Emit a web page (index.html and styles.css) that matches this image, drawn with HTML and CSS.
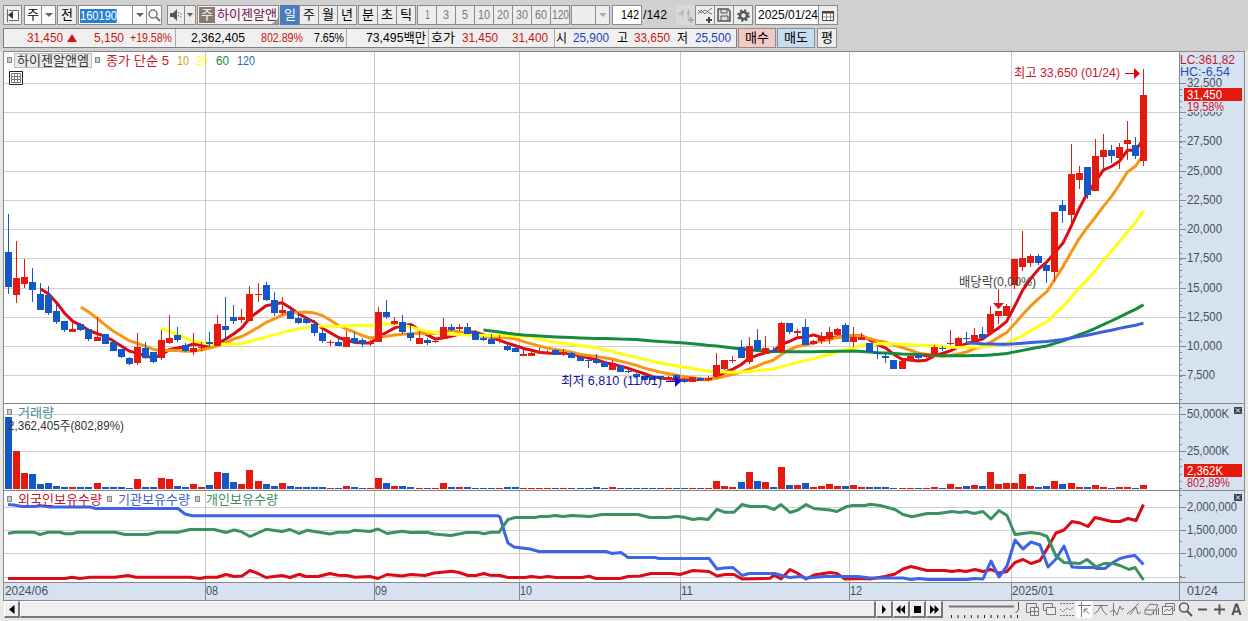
FILE: index.html
```html
<!DOCTYPE html>
<html lang="ko">
<head>
<meta charset="utf-8">
<title>하이젠알앤엠</title>
<link rel="stylesheet" href="styles.css">
</head>
<body>
<div class="app">
  <div class="toolbar">
    <button class="btn w19"><svg width="15" height="15"><path d="M2.500 1v13M4 2.500h9.500v10H4" fill="#fff" stroke="#666"/><path d="M3 7l5-4v8z" fill="#333"/></svg></button>
    <button class="btn w18 g2 white">주</button><button class="btn w15 j white"><i class="dn"></i></button>
    <button class="btn w20 g1">전</button>
    <div class="code g1"><span class="sel" data-w="37">160190</span></div><button class="btn w15 j white"><i class="dn"></i></button><button class="btn w16 j white"><svg width="14" height="15"><circle cx="6" cy="6" r="4" fill="none" stroke="#777" stroke-width="1.500"/><path d="M9 9l4 4" stroke="#777" stroke-width="2"/></svg></button>
    <button class="btn w18 g5"><svg width="14" height="14"><path d="M1 5h3l4-4v12l-4-4H1z" fill="#555"/><path d="M9.500 4v6M12 5v5" stroke="#666" stroke-dasharray="1.500 1.500"/></svg></button><button class="btn w11 j"><i class="dn sm"></i></button>
    <div class="name g1"><b>주</b><span data-w="60">하이젠알앤</span><i></i></div>
    <button class="btn w20 g1 on">일</button><button class="btn w20 j">주</button><button class="btn w20 j">월</button><button class="btn w20 j">년</button>
    <button class="btn w20 g1">분</button><button class="btn w20 j">초</button><button class="btn w20 j">틱</button>
    <button class="btn n g1"><span data-w="5">1</span></button><button class="btn n j"><span data-w="6">3</span></button><button class="btn n j"><span data-w="6">5</span></button><button class="btn n j"><span data-w="12">10</span></button><button class="btn n j"><span data-w="12">20</span></button><button class="btn n j"><span data-w="12">30</span></button><button class="btn n j"><span data-w="12">60</span></button><button class="btn n j"><span data-w="17">120</span></button>
    <div class="btn w25 g1"></div><button class="btn w15 j"><i class="dn off"></i></button>
    <div class="count g2"><span data-w="18">142</span></div><div class="total"><span data-w="24">/142</span></div>
    <button class="btn w20 tools bare"><svg width="17" height="16"><path d="M4.500 2v9M10.500 2v9" stroke="#bbb"/><path d="M3 4h3v4H3zM9 4h3v4H9zM1 5h2v3H1z" fill="#bbb"/><path d="M10 13h6M13 10v6" stroke="#aaa" stroke-width="2"/></svg></button><button class="btn w20 j"><svg width="17" height="17"><path d="M1 7l3-4 4 4 4-4 3-2M1 3l3 3 4-3 4 3 3 1" fill="none" stroke="#777"/><path d="M9 13h6M12 10v6" stroke="#444" stroke-width="2"/></svg></button><button class="btn w20 j"><svg width="16" height="16"><path d="M2 2h10l2 2v10H2z" fill="#ddd" stroke="#555" stroke-width="1.500"/><path d="M5 2v4h6V2M5 14V9h7v5" fill="none" stroke="#555"/></svg></button><button class="btn w20 j"><svg width="15" height="15"><circle cx="7.500" cy="7.500" r="3.500" fill="none" stroke="#555" stroke-width="2.500"/><circle cx="7.500" cy="7.500" r="5.300" fill="none" stroke="#555" stroke-width="2" stroke-dasharray="2.160 2"/></svg></button>
    <div class="date g2"><span data-w="60">2025/01/24</span></div><button class="btn w20 j"><svg width="14" height="13"><path d="M1.500 2.500h11v9h-11z" fill="#fff" stroke="#444"/><path d="M1 2h12v2.500H1z" fill="#444"/><path d="M5.500 4v7M9.500 4v7M2 8h10" stroke="#888"/></svg></button>
  </div>

  <div class="quotes">
    <div class="qbox">
      <div class="cell c1"><span class="up" style="margin-left:23px" data-w="36">31,450</span><i class="tri"></i><span class="up" style="margin-left:17px" data-w="30">5,150</span><span class="up" style="margin-left:6px" data-w="42">+19.58%</span></div>
      <div class="cell c2"><span style="margin-left:15px" data-w="54">2,362,405</span><span class="up" style="margin-left:16px" data-w="42">802.89%</span><span style="margin-left:11px" data-w="30">7.65%</span></div>
      <div class="cell c3"><span style="margin-left:19px" data-w="60">73,495백만</span></div>
      <div class="cell c4"><span style="margin-left:2px" data-w="24">호가</span><span class="up" style="margin-left:7px" data-w="36">31,450</span><span class="up" style="margin-left:14px" data-w="36">31,400</span></div>
      <div class="cell c5"><span style="margin-left:1px" data-w="11">시</span><span class="down" style="margin-left:6px" data-w="36">25,900</span><span style="margin-left:8px" data-w="11">고</span><span class="up" style="margin-left:6px" data-w="36">33,650</span><span style="margin-left:7px" data-w="11">저</span><span class="down" style="margin-left:7px" data-w="36">25,500</span></div>
    </div>
    <button class="act buy">매수</button><button class="act sell">매도</button><button class="act avg">평</button>
  </div>

  <svg class="chart" id="chart" width="1248" height="551" viewBox="0 50 1248 551"></svg>

  <div class="scroll">
    <button class="sb left"><svg width="6" height="9"><path d="M5.500 0v9L0 4.500z"/></svg></button>
    <div class="track"></div>
    <button class="sb"><svg width="6" height="9"><path d="M1 0v9l4-4.500z"/></svg></button><button class="sb"><svg width="9" height="9"><path d="M4.500 0v9L0 4.500zM9 0v9L4.500 4.500z"/></svg></button><button class="sb"><svg width="7" height="7"><path d="M0 0h7v7H0z"/></svg></button><button class="sb"><svg width="9" height="9"><path d="M0 0v9l4.500-4.500zM4.500 0v9L9 4.500z"/></svg></button>
    <svg class="slider" width="76" height="18"><path d="M3 5.500h65" stroke="#777" stroke-width="2"/><path d="M5 15.500h68" stroke="#222" stroke-width="3" stroke-dasharray="1 5.600"/><path d="M72.500 1v8l-3 3" fill="none" stroke="#555"/></svg>
    <svg class="icons" width="222" height="18" fill="none" stroke="#777">
      <path d="M2.500 2.500h10v9h-10z"/><path d="M6.500 6.500h8v8h-8z" fill="#eee"/><path d="M10.500 6.500v8M6.500 10.500h8"/>
      <path d="M19.500 2.500h9v7h-9z"/><path d="M22.500 6.500h9v7h-9z" fill="#eee"/>
      <path d="M36 2.500h14M36 14.500h14M36 8l3 3 4-4 3 2 4-3" stroke-dasharray="2 1"/>
      <path d="M52 0h16v17H52z" fill="#fff" stroke="none"/><path d="M54 4.500h13M57.500 1v15M65.500 13L60 8M60 12V8h4"/>
      <path d="M70 4.500h14M70 13l4-3 3-6 2 6 4 4"/>
      <path d="M89.500 2v13M86 11l4-2 3 5 3-9 2 4 2-2"/>
      <path d="M103 13l6-5 6-6M106 14l6-8 2 7 3-2"/>
      <path d="M121 9l5-6 8 1-3 5-4 5-6-1zM121 9h9M129.500 9v5M132.500 8v6M134.500 7v7"/>
      <path d="M141.500 2.500h9v7h-9z"/><path d="M138.500 5.500h10v8h-10z" fill="#eee"/><path d="M140 11l3-3 2 2 3-3"/>
      <g stroke="#555"><circle cx="160" cy="6.500" r="4.500" stroke-width="1.500"/><path d="M163 10l5 5" stroke-width="2"/><path d="M174 8.500h9M190 8.500h11M195.500 3.500v10" stroke-width="2"/><path d="M208.500 14l3.500-10.500h1l3.500 10.500M209.500 10.500h6" stroke-width="2.200"/></g>
    </svg>
  </div>
</div>
<script src="chart.js"></script>
</body>
</html>
```
FILE: styles.css
```css
* { box-sizing: border-box; }
body {
  margin: 0;
  background: #d0d0d0;
  font: 13px/16px "Liberation Sans", "Noto Sans CJK KR", sans-serif;
  color: #000;
}
.app { width: 1248px; height: 621px; overflow: hidden; display: flex; flex-direction: column; background: #d0d0d0; }
button { font: inherit; color: inherit; padding: 0; margin: 0; }
span { white-space: nowrap; }
[data-w] { display: inline-block; flex: none; transform-origin: 0 50%; }
.toolbar { display: flex; height: 25px; padding: 5px 0 0 3px; flex: none; }
.btn {
  height: 20px; border: 1px solid #8c8c8c; background: #ededed; flex: none;
  display: flex; align-items: center; justify-content: center; overflow: hidden;
}
.white { background: #fafafa; }
.j { margin-left: -1px; }
.g1 { margin-left: 1px; }
.g2 { margin-left: 2px; }
.g5 { margin-left: 5px; }
.w11 { width: 12px; }
.w15 { width: 15px; }
.w16 { width: 16px; }
.w18 { width: 18px; }
.w19 { width: 19px; }
.w20 { width: 20px; }
.w25 { width: 25px; }
.n { width: 20px; color: #777; }
.on { background: #4a7cc0; color: #fff; border-color: #4a7cc0; }
.dn { border: 4px solid transparent; border-top: 4px solid #666; border-bottom: 0; }
.dn.sm { border-width: 3px; border-top-width: 4px; border-bottom: 0; }
.dn.off { border-top-color: #aaa; }
.code { width: 55px; height: 20px; border: 1px solid #8c8c8c; background: #fff; padding: 2px 1px; flex: none; }
.sel { height: 14px; line-height: 14px; background: #2a7fcf; color: #fff; }
.name {
  width: 82px; height: 20px; border: 1px solid #8c8c8c; background: #f4f4f4; padding: 1px; flex: none;
  display: flex; color: #7a1450; position: relative;
}
.name b { width: 16px; height: 16px; background: #8a7a72; color: #fff; font-weight: 400; text-align: center; margin-right: 2px; }
.name i { position: absolute; right: 0; bottom: 0; border: 3px solid #999; border-top-color: transparent; border-left-color: transparent; }
.count { width: 30px; height: 20px; border: 1px solid #8c8c8c; background: #fff; padding: 1px 0 0 8px; flex: none; }
.total { padding: 2px 0 0 1px; width: 26px; flex: none; }
.tools { margin-left: 8px; }
.bare { background: #d8d8d8; border-color: transparent #8c8c8c transparent transparent; }
.date { width: 64px; height: 20px; border: 1px solid #8c8c8c; background: #fff; padding: 1px 2px; flex: none; }

.quotes { display: flex; height: 25px; padding: 3px 0 0 3px; flex: none; }
.qbox { display: flex; width: 734px; height: 20px; border: 1px solid #808080; background: #f0f0f0; }
.cell { display: flex; align-items: center; border-right: 1px solid #aaa; height: 18px; flex: none; }
.c1 { width: 172px; }
.c2 { width: 171px; }
.c3 { width: 82px; }
.c4 { width: 126px; }
.c5 { border: 0; }
.up { color: #c81414; }
.down { color: #1a3cc0; }
.tri { border: 5px solid transparent; border-bottom: 8px solid #d01414; border-top: 0; margin-left: 4px; }
.act { height: 20px; border: 1px solid #8c8c8c; margin-left: 1px; width: 38px; }
.buy { background: #f2c9c5; }
.sell { background: #c5dcf3; }
.avg { background: #ededed; width: 20px; margin-left: 2px; }

.chart { display: block; flex: none; font-size: 13px; }
.scroll { display: flex; height: 20px; background: #e8e8e8; padding-left: 4px; flex: none; }
.sb {
  width: 16.75px; height: 17px; border: 1px solid #fff; border-right: 2px solid #777; border-bottom: 2px solid #777;
  background: #efefef; display: flex; align-items: center; justify-content: center; flex: none;
}
.left { width: 16px; }
.track { width: 856px; flex: none; height: 17px; background: #efefef; border: 1px solid #fff; border-right: 2px solid #777; border-bottom: 2px solid #777; }
.slider { margin-left: 3px; flex: none; }
.icons { margin-left: 2px; flex: none; }
```
FILE: chart.js
```js
// Each candle: direction, high, body top, body bottom, low, volume top (chart y units).
const candles = `B 214 252 287 294 417|R 241 278 295 303 451|R 259 277 284 288 473|B 268 282 290 302 474|B 283 294 310 310 484
B 286 295 313 315 483|B 304 311 322 324 486|B 321 321 330 332 487|R 322 329 332 332 487|B 323 324 330 331 487
B 329 329 339 341 487|R 317 337 341 341 483|B 334 334 344 344 487|B 342 342 351 351 487|B 349 349 357 358 487
B 357 358 364 365 488|R 333 347 363 365 479|B 342 348 358 359 487|B 352 352 362 363 487|R 330 340 358 360 478
R 315 338 343 344 479|B 327 335 340 342 486|B 343 345 351 352 487|R 333 348 352 355 484|R 342 347 348 351 487
B 332 342 344 347 485|R 315 324 346 346 472|B 297 326 330 341 473|B 305 317 321 324 482|R 309 317 320 323 484
R 286 294 321 321 470|R 283 294 295 302 481|B 282 285 300 301 484|B 292 300 313 316 486|R 297 310 313 315 483
B 308 311 319 319 486|B 312 318 323 324 487|B 317 319 323 324 487|B 320 324 333 336 487|B 329 333 341 343 487
R 340 342 343 346 488|B 338 342 346 346 488|R 331 337 347 347 486|B 332 338 343 344 487|B 338 340 344 347 488
R 340 343 344 346 488|R 307 312 342 342 478|B 300 312 317 319 483|R 317 321 324 325 486|B 315 322 332 334 486
B 323 333 338 341 487|R 332 338 344 344 488|B 338 340 343 345 488|R 338 341 342 343 488|R 318 327 339 339 483
B 324 327 330 331 487|R 324 327 329 331 487|B 323 327 334 334 487|B 330 332 340 340 488|B 336 338 340 341 488
B 334 339 344 344 488|R 335 340 341 343 488|B 345 346 350 351 487|B 346 348 352 352 487|R 350 354 356 356 488
R 351 353 356 356 488|R 348 351 353 354 488|R 350 352 353 354 488|B 349 350 355 355 488|R 349 352 353 356 488
B 352 353 358 358 488|B 356 357 361 361 488|B 359 360 361 368 488|B 354 360 363 364 487|B 362 362 367 367 488
R 360 365 370 370 487|B 365 366 372 372 488|B 369 371 372 373 488|B 373 374 377 377 488|B 374 376 380 380 488
B 376 376 380 380 488|B 376 376 379 380 488|R 376 377 380 380 488|B 374 375 379 380 488|B 378 380 382 383 488
R 377 377 382 382 488|B 377 378 380 381 488|R 376 378 380 381 488|R 353 365 376 378 481|R 360 360 369 370 486
R 356 360 361 363 487|B 340 347 358 358 482|R 337 346 362 364 472|B 329 340 350 351 481|R 336 348 354 354 482
B 347 350 352 353 487|R 322 323 352 352 467|B 323 323 332 334 485|R 329 331 333 336 485|B 319 327 345 345 483
R 340 341 344 345 487|R 332 336 341 344 486|R 327 332 339 344 484|R 328 329 335 336 486|B 323 325 342 342 486
R 327 337 342 347 485|R 333 337 340 340 487|B 343 343 352 352 487|B 347 352 354 359 487|B 353 356 358 363 487
B 360 360 369 369 488|R 359 361 369 369 488|R 354 356 361 362 488|B 353 355 358 360 488|R 353 355 357 358 488
R 345 347 355 356 487|B 346 348 349 351 488|R 330 343 344 345 484|R 337 338 346 346 487|B 332 338 339 342 486
R 328 335 341 342 485|B 327 334 338 339 486|R 306 314 333 333 472|R 311 311 316 324 484|R 304 306 316 316 483
R 259 259 285 289 483|R 231 258 267 271 474|R 254 256 263 267 486|B 254 256 263 265 487|B 262 265 271 283 486
R 212 212 272 282 481|B 200 205 211 223 484|R 144 174 215 225 483|R 166 173 180 189 487|B 167 167 195 199 487
R 139 156 191 191 485|R 134 150 157 170 487|B 145 150 156 163 488|R 143 147 158 169 487|R 121 140 144 160 487
B 137 145 156 159 488|R 69 95 161 166 485`.split(/[|\n]/).map(s => {
  const [d, ...v] = s.trim().split(' ');
  return [d, ...v.map(Number)];
});
const STEP = 8.0496;
const cx = i => 8.5 + i * STEP;
const color = { R: '#e6190f', B: '#1458c8' };
const out = [];
const rect = (x, y, w, h, f) => out.push(`<rect x="${x}" y="${y}" width="${w}" height="${h}" fill="${f}"/>`);
const text = (x, y, w, s, f) => out.push(`<text x="${x}" y="${y}" textLength="${w}" lengthAdjust="spacingAndGlyphs" fill="${f}">${s}</text>`);
const line = (pts, c, w = 3) => out.push(`<polyline points="${pts}" fill="none" stroke="${c}" stroke-width="${w}" stroke-linejoin="round"/>`);

// frame and backgrounds
rect(0, 51, 1248, 550, '#e8e8e8');
rect(4, 52, 1175, 531, '#fff');
rect(1180, 52, 64, 531, '#d6e2f0');
rect(4, 583, 1240, 18, '#d6e2f0');

// grid
const prices = [83, 112, 141, 171, 200, 229, 258, 288, 317, 346, 375];
const rows = [...prices, 414, 451, 507, 530, 553, 577];
const months = [[205, '08'], [374, '09'], [519, '10'], [680, '11'], [849, '12'], [1011, '2025/01']];
rows.forEach(y => { rect(4, y, 1174, 1, '#d0d0d0'); rect(1180, y, 6, 1, '#888'); });
months.forEach(([x]) => { rect(x, 52, 1, 530, '#c8c8c8'); rect(x, 583, 1, 17, '#888'); });
for (let y = 65.6; y < 402; y += 5.85) rect(1180, Math.round(y), 2, 1, '#888');
for (let y = 407; y < 489; y += 7.4) rect(1180, Math.round(y), 2, 1, '#888');
for (let y = 495; y < 581; y += 11.6) rect(1180, Math.round(y), 2, 1, '#888');

// moving averages of the closing level
const close = candles.map(c => c[0] === 'R' ? c[2] : c[3]);
const ma = n => close.map((_, i) => i < n - 1 ? null
  : `${cx(i).toFixed(1)},${(close.slice(i - n + 1, i + 1).reduce((a, b) => a + b) / n + 0.5).toFixed(1)}`).filter(Boolean).join(' ');
line(ma(5), '#dc0a14');
line(ma(10), '#f59614');
line(ma(20), '#ffff14');
line(ma(60), '#148c3c');
line(ma(120), '#3c5fe0');

// candles and volume
candles.forEach(([d, hi, top, bot, lo, vol], i) => {
  const x = Math.round(cx(i) - 0.5);
  rect(x, hi, 1, lo - hi, color[d]);
  rect(x - 3, top, 7, Math.max(1, bot - top), color[d]);
  rect(x - 3, vol, 7, 489 - vol, color[d]);
});

// holdings by investor group
line('8,578.5 65,578.5 72,577.3 80,578.5 90,577.3 115,577.3 128,575.5 136,577.3 190,577.3 200,578.5 206,577.3 217,577.3 226,574.5 234,576.5 242,576 250,570.5 258,573.5 266,577.5 282,575.5 290,577.5 299,574.3 306,576.5 318,576.5 330,573.5 338,575.3 347,575.5 355,577.3 370,576.5 378,578.5 387,574.5 402,576 411,574.5 425,575.5 434,573 452,571.3 459,572.5 468,575.5 476,575.5 484,573.5 490,575.3 500,575.5 508,577.5 525,577.5 531,576.5 540,577.5 548,576.5 556,577.5 582,577.5 589,576.3 596,578.5 620,578.5 628,576.5 640,576 651,573.5 672,573.5 680,574.5 693,570.5 709,571.5 717,576 725,574.5 734,574.5 742,579 770,578.3 774,575 781,579 790,569.5 798,573.5 806,579 814,575 830,572.5 837,573.5 845,579 866,578.5 870,579 885,576.5 895,574 903,569 911,566.5 927,570.5 945,570.5 952,571.5 959,570.5 966,571.5 975,569.5 983,571.5 991,569.5 999,573 1007,571.5 1015,562.5 1023,559.5 1031,563.5 1040,560.5 1047,549 1056,533 1064,530 1072,521.5 1080,523 1088,526.5 1095,517.5 1112,521.5 1120,521.5 1128,518.5 1136,520.5 1143.5,504.5', '#dc0a14');
line('8,504.5 14,505 22,506.5 35,506.5 40,505.5 50,507 90,507 96,508.5 178,508.5 185,514 192,515.7 498,515.7 500,517 505,534 508,543 514,547 530,549 539,551.5 606,551.5 612,553.5 621,552.5 628,557.5 655,557.5 659,558.5 709,558.5 717,569 724,568 733,567.5 742,575.5 749,573.5 775,573.5 783,576 790,577.5 800,576.5 806,578 825,576.5 858,576.5 870,578 903,578 911,579.5 919,578.5 928,579.5 967,579.5 974,578.5 983,579 991,561 999,577 1007,566 1015,540 1023,549 1031,542 1040,545 1048,567 1056,559 1064,546 1072,567 1080,567.5 1095,567.5 1096,568.5 1105,568.5 1112,563 1120,558.5 1128,556.5 1135,555.5 1143.5,564.5', '#3c64e6');
line('8,533.5 14,532.3 34,532.3 40,534.5 48,532.3 60,532.3 65,533.7 72,533.7 78,532.3 115,532.3 125,534.5 147,534.5 158,532.3 178,532.3 190,529.5 214,529.5 226,532.5 234,530 241,531.5 250,536.5 258,533 266,529.3 282,531.5 290,529.5 299,533.5 307,530.3 330,534 338,532.3 348,532.3 354,530.3 370,531.5 378,529 387,533.5 402,531.2 410,532.5 427,532.3 434,534 451,535.5 466,532.5 478,532.5 484,533.7 491,532.3 499,532.3 504,525 508,519.5 515,517.5 535,517.5 540,516.5 548,516.5 555,515.5 563,516.5 572,515.5 590,516.5 602,514.5 638,514.5 650,517.5 668,517.5 677,516.3 685,517.5 693,519.5 700,518.5 708,519.5 717,509.3 725,512.3 734,512.3 742,504.5 750,506.5 766,506.5 774,509.5 781,504.5 790,512.5 798,510 806,504.5 814,508.5 830,510 837,511.5 846,506.8 853,505.5 865,505.5 870,504.3 880,505.5 895,509.5 903,514.5 912,516.8 927,513.5 938,513.5 952,511.5 960,512.5 966,511.5 974,513.5 983,511.5 991,519 999,510.5 1007,515.5 1015,534.5 1031,532.5 1040,533.7 1047,536.5 1056,556 1064,562.5 1080,563.5 1087,559.5 1096,567 1104,563.5 1113,563.5 1120,565.5 1129,569.5 1135,567.5 1143.5,580', '#3c9164');

// panel borders
[[3, 51, 1242, 1], [3, 403, 1242, 1], [3, 490, 1242, 1], [3, 582, 1242, 1], [3, 600, 1242, 1],
 [3, 51, 1, 550], [1179, 51, 1, 550], [1244, 51, 1, 550]].forEach(r => rect(...r, '#888'));

// axis labels
const AX = '#484f58';
['32,500', '30,000', '27,500', '25,000', '22,500', '20,000', '17,500', '15,000', '12,500', '10,000', '7,500']
  .forEach((s, i) => text(1187, prices[i] + 4, s.length > 5 ? 35 : 28, s, AX));
text(1187, 418, 42, '50,000K', AX);
text(1187, 455, 42, '25,000K', AX);
text(1187, 511, 50, '2,000,000', AX);
text(1187, 534, 50, '1,500,000', AX);
text(1187, 557, 50, '1,000,000', AX);
rect(1180, 53, 63, 25, '#d6e2f0');
text(1180, 64, 55, 'LC:361,82', '#c8142d');
text(1180, 76, 50, 'HC:-6,54', '#1e50b4');
rect(1187, 101, 55, 11, '#d6e2f0');
rect(1184, 88, 58, 13, '#e6190f');
text(1187, 99, 35, '31,450', '#fff');
text(1187, 111, 37, '19,58%', '#c8142d');
rect(1184, 464, 58, 13, '#e6190f');
text(1187, 475, 36, '2,362K', '#fff');
text(1187, 487, 43, '802,89%', '#c8142d');
text(5, 595, 43, '2024/06', AX);
months.forEach(([x, s]) => text(x + 1, 595, s.length > 2 ? 42 : 12, s, AX));
text(1187, 595, 31, '01/24', AX);
[407, 494].forEach(y => {
  rect(1234, y, 8, 7, '#3c4650');
  out.push(`<path d="M1236 ${y + 1.5}l4 4m0-4l-4 4" stroke="#fff"/>`);
});

// legends
const mark = (x, y) => out.push(`<rect x="${x + 0.5}" y="${y + 0.5}" width="4" height="5" fill="#ccc" stroke="#888"/>`);
mark(7, 57); mark(95, 57);
out.push('<rect x="14.5" y="53.5" width="77" height="14" fill="#ebebeb" stroke="#bbb"/>');
text(17, 65, 72, '하이젠알앤엠', '#333');
text(106, 65, 63, '종가 단순 5', '#c8142d');
text(177, 65, 12, '10', '#d29b1e');
text(196, 65, 12, '20', '#ffff14');
text(216, 65, 13, '60', '#148c3c');
text(237, 65, 18, '120', '#3264be');
out.push('<path d="M9.5 71.5h13v13h-13z" fill="#fff" stroke="#222"/><path d="M11.5 73.5h9v9h-9zM14.5 73v10M17.5 73v10M11 76.5h10M11 79.5h10" fill="none" stroke="#777"/>');
mark(7, 409);
text(18, 417, 36, '거래량', '#3c8c96');
text(8, 430, 116, '2,362,405주(802,89%)', '#333');
mark(7, 496); text(18, 504, 84, '외국인보유수량', '#c8142d');
mark(107, 496); text(118, 504, 72, '기관보유수량', '#3c64c8');
mark(195, 496); text(206, 504, 72, '개인보유수량', '#3c8c64');

// high, low and ex-dividend annotations
text(1014, 77, 106, '최고 33,650 (01/24)', '#c8142d');
out.push('<path d="M1125 73h9v-5l6 5.5-6 5.5v-5h-9z" fill="#e6000f"/>');
text(561, 385, 101, '최저 6,810 (11/01)', '#1414a0');
out.push('<path d="M666 381h9v-5l6 5.5-6 5.5v-5h-9z" fill="#0a0ae6"/>');
text(959, 286, 77, '배당락(0,00%)', '#444');
out.push('<path d="M998 289h1v14h5l-5.5 6-5.5-6h5z" fill="#d2141e"/>');

document.getElementById('chart').innerHTML = out.join('');

// condense each figure horizontally so it fills its column width
document.querySelectorAll('[data-w]').forEach(el => {
  const natural = el.getBoundingClientRect().width;
  const w = +el.dataset.w;
  el.style.width = natural + 'px';
  el.style.marginRight = (w - natural) + 'px';
  el.style.transform = `scaleX(${(w / natural).toFixed(4)})`;
});
```
